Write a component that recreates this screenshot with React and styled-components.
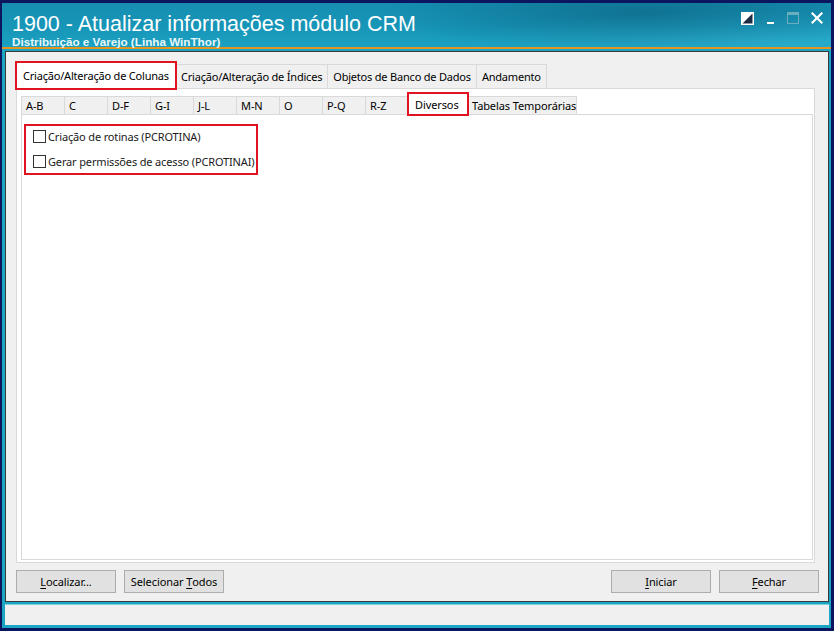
import React from "react";
import styled, { createGlobalStyle, css } from "styled-components";

const Global = createGlobalStyle`
  html, body { margin: 0; padding: 0; background: #0b1560; }
  * { box-sizing: border-box; }
`;

const Window = styled.div`
  width: 834px;
  height: 631px;
  background: #0b1560;
  padding: 3px 3px 3px 2px;
  display: flex;
  flex-direction: column;
  font-family: "Noto Sans", "Open Sans", sans-serif;
`;

const Chrome = styled.div`
  flex: 1;
  display: flex;
  flex-direction: column;
  background: #1aa6c3;
  padding: 0 0 3px 0;
`;

const TitleBar = styled.div`
  position: relative;
  height: 44px;
  padding: 10px 0 0 10px;
  display: flex;
  flex-direction: column;
  background:
    radial-gradient(ellipse 260px 40px at 640px 10px, rgba(10, 90, 120, 0.55), rgba(10, 90, 120, 0) 100%),
    radial-gradient(ellipse 300px 30px at 760px 38px, rgba(60, 190, 220, 0.45), rgba(60, 190, 220, 0) 100%),
    linear-gradient(180deg, #168db0 0%, #1796b8 55%, #1ba1c1 100%);
  color: #fff;
`;

const Title = styled.div`
  font-family: "Liberation Sans", Arial, sans-serif;
  font-size: 21.5px;
  line-height: 22px;
  color: #ffffff;
`;

const Subtitle = styled.div`
  font-family: "Liberation Sans", Arial, sans-serif;
  font-weight: bold;
  font-size: 11.7px;
  line-height: 12px;
  margin-top: 1px;
  color: #e8f6fb;
`;

const Controls = styled.div`
  position: absolute;
  top: 9px;
  right: 8px;
  display: flex;
  align-items: flex-start;
  gap: 12px;
`;

const OrangeLine = styled.div`
  height: 2px;
  background: #e69420;
`;

const Frame = styled.div`
  flex: 1;
  margin: 2px 2px 0 3px;
  border: 1px solid #3a3a3a;
  background: #f0f0f0;
  display: flex;
  flex-direction: column;
  padding: 10px 9px 8px 10px;
`;

const TabStrip = styled.div`
  display: flex;
  align-items: flex-end;
  height: 26px;
  padding-left: ${(p) => p.$pad || 0}px;
`;

const TopTab = styled.div`
  height: ${(p) => (p.$active ? 26 : 24)}px;
  padding: 0 5px;
  display: flex;
  align-items: center;
  font-size: 11px;
  letter-spacing: -0.2px;
  color: #000;
  white-space: nowrap;
  border: 1px solid #d9d9d9;
  border-bottom: none;
  margin-left: -1px;
  background: ${(p) => (p.$active ? "#ffffff" : "#f0f0f0")};
  position: relative;
  z-index: ${(p) => (p.$active ? 2 : 1)};
  ${(p) =>
    p.$active &&
    css`
      margin-bottom: -1px;
      height: 27px;
      padding: 0 6px 1px;
    `}
  ${(p) =>
    p.$mark &&
    css`
      outline: 2px solid #e0141e;
      outline-offset: -1px;
    `}
`;

const Page = styled.div`
  flex: 1;
  background: #ffffff;
  border: 1px solid #d9d9d9;
  margin-right: 4px;
  display: flex;
  flex-direction: column;
  padding: 3px 1px 2px 4px;
`;

const SubStrip = styled.div`
  display: flex;
  align-items: flex-end;
  height: 22px;
`;

const SubTab = styled.div`
  width: ${(p) => p.$w}px;
  height: 18px;
  padding-left: 4px;
  display: flex;
  align-items: center;
  font-size: 11px;
  letter-spacing: -0.1px;
  color: #000;
  white-space: nowrap;
  border: 1px solid #d9d9d9;
  border-bottom: none;
  margin-right: -1px;
  background: #f0f0f0;
  position: relative;
  ${(p) =>
    p.$active &&
    css`
      height: 22px;
      background: #ffffff;
      margin-bottom: -1px;
      padding-left: 6px;
      z-index: 2;
    `}
  ${(p) =>
    p.$mark &&
    css`
      outline: 2px solid #e0141e;
      outline-offset: -1px;
    `}
`;

const SubPage = styled.div`
  flex: 1;
  background: #ffffff;
  border: 1px solid #d9d9d9;
  padding: 9px 0 0 2px;
`;

const CheckGroup = styled.div`
  width: 234px;
  height: 51px;
  border: 2px solid #e0141e;
  padding: 2px 0 0 7px;
  display: flex;
  flex-direction: column;
  gap: 9px;
`;

const CheckRow = styled.label`
  display: flex;
  align-items: center;
  gap: 2px;
  height: 16px;
  font-size: 11px;
  letter-spacing: -0.15px;
  color: #1a1a1a;
  white-space: nowrap;
`;

const Box = styled.span`
  width: 13px;
  height: 13px;
  border: 1px solid #333333;
  background: #ffffff;
  flex: none;
`;

const Footer = styled.div`
  display: flex;
  align-items: center;
  padding-top: 7px;
  gap: 8px;
`;

const Spacer = styled.div`
  flex: 1;
`;

const Button = styled.button`
  width: 100px;
  height: 23px;
  background: #e1e1e1;
  border: 1px solid #adadad;
  font-family: "Noto Sans", "Open Sans", sans-serif;
  font-size: 11px;
  letter-spacing: -0.1px;
  color: #000;
  padding: 0;
  display: flex;
  align-items: center;
  justify-content: center;
  u { text-decoration: underline; text-underline-offset: 2px; }
`;

const StatusBar = styled.div`
  height: 21px;
  margin: 2px 2px 0 3px;
  background: #f0f0f0;
  border-top: 1px solid #7fd0e0;
`;

const subTabs = ["A-B", "C", "D-F", "G-I", "J-L", "M-N", "O", "P-Q", "R-Z"];

export default function App() {
  return (
    <>
      <Global />
      <Window>
        <Chrome>
          <TitleBar>
            <Title>1900 - Atualizar informações módulo CRM</Title>
            <Subtitle>Distribuição e Varejo (Linha WinThor)</Subtitle>
            <Controls>
              <svg width="13" height="13" viewBox="0 0 13 13">
                <rect x="0.75" y="0.75" width="11.5" height="11.5" fill="#1a2c44" stroke="#fff" strokeWidth="1.5" />
                <polygon points="1,1 12,1 1,12" fill="#fff" />
              </svg>
              <svg width="9" height="13" viewBox="0 0 9 13">
                <rect x="1" y="10" width="7" height="2" fill="#fff" />
              </svg>
              <svg width="12" height="13" viewBox="0 0 12 13">
                <rect x="0.5" y="0.5" width="11" height="11" fill="none" stroke="#6aaebe" strokeWidth="1" />
                <rect x="0.5" y="0.5" width="11" height="2.5" fill="#6aaebe" />
              </svg>
              <svg width="12" height="13" viewBox="0 0 12 13">
                <path d="M1.5 1.5 L10.5 10.5 M10.5 1.5 L1.5 10.5" stroke="#fff" strokeWidth="2.2" strokeLinecap="square" />
              </svg>
            </Controls>
          </TitleBar>
          <OrangeLine />
          <Frame>
            <TabStrip $pad={1}>
              <TopTab $active $mark>Criação/Alteração de Colunas</TopTab>
              <TopTab>Criação/Alteração de Índices</TopTab>
              <TopTab>Objetos de Banco de Dados</TopTab>
              <TopTab>Andamento</TopTab>
            </TabStrip>
            <Page>
              <SubStrip>
                {subTabs.map((t) => (
                  <SubTab key={t} $w={44}>
                    {t}
                  </SubTab>
                ))}
                <SubTab $w={60} $active $mark>
                  Diversos
                </SubTab>
                <SubTab $w={110}>Tabelas Temporárias</SubTab>
              </SubStrip>
              <SubPage>
                <CheckGroup>
                  <CheckRow>
                    <Box />
                    Criação de rotinas (PCROTINA)
                  </CheckRow>
                  <CheckRow>
                    <Box />
                    Gerar permissões de acesso (PCROTINAI)
                  </CheckRow>
                </CheckGroup>
              </SubPage>
            </Page>
            <Footer>
              <Button>
                <u>L</u>ocalizar...
              </Button>
              <Button>
                Selecionar&nbsp;<u>T</u>odos
              </Button>
              <Spacer />
              <Button>
                <u>I</u>niciar
              </Button>
              <Button>
                <u>F</u>echar
              </Button>
            </Footer>
          </Frame>
          <StatusBar />
        </Chrome>
      </Window>
    </>
  );
}
